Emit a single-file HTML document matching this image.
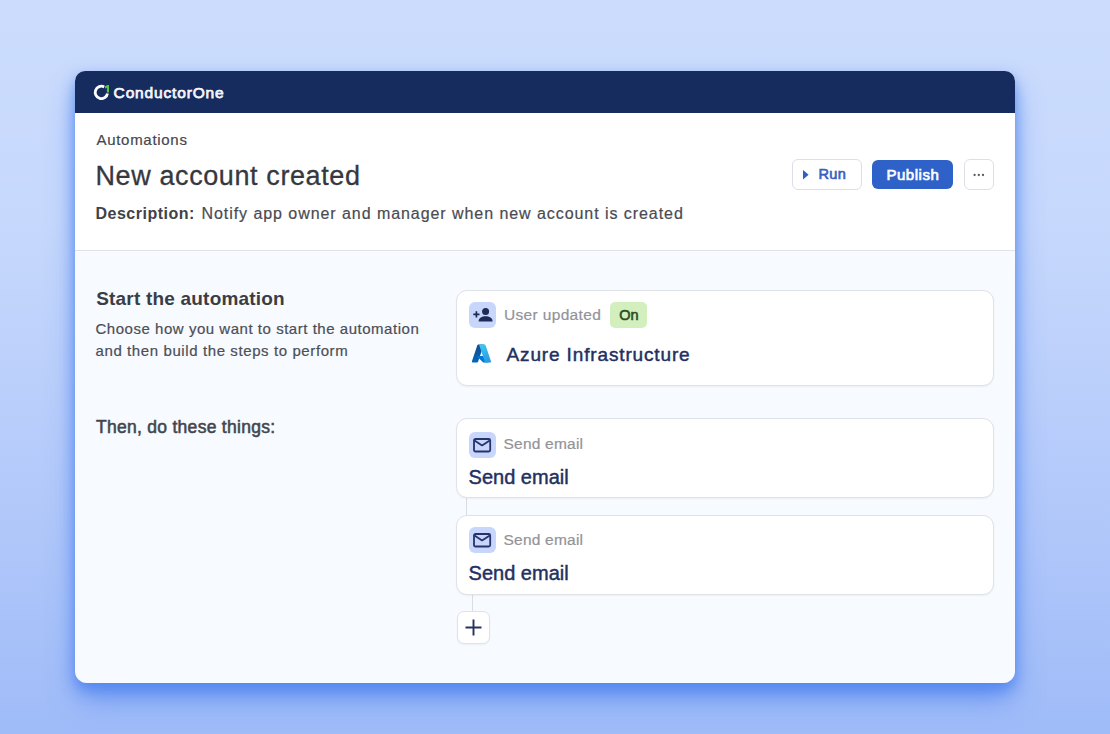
<!DOCTYPE html>
<html lang="en">
<head>
<meta charset="utf-8">
<title>ConductorOne – Automations</title>
<style>
  html, body { margin: 0; padding: 0; }
  body {
    width: 1110px; height: 734px; overflow: hidden; position: relative;
    font-family: "Liberation Sans", sans-serif;
    background: linear-gradient(180deg, #cbdcfd 0%, #c6d8fc 30%, #b4cafa 65%, #9fbbf8 100%);
  }
  .abs { position: absolute; white-space: nowrap; line-height: 1; }
  .window {
    position: absolute; left: 75px; top: 71.4px; width: 940px; height: 611.6px;
    border-radius: 10px 10px 12px 12px; background: #f7fafe; overflow: hidden;
  }
  .shadow {
    position: absolute; left: 75px; top: 71.4px; width: 940px; height: 611.6px;
    border-radius: 10px 10px 12px 12px;
    box-shadow: 0 7px 14px 0px rgba(76, 130, 238, 0.78), 0 18px 30px -4px rgba(76, 130, 240, 0.7);
  }
  .nav { position: absolute; left: 0; top: 0; width: 940px; height: 42px; background: #172c5e; }
  .head { position: absolute; left: 0; top: 42px; width: 940px; height: 136.6px; background: #ffffff; border-bottom: 1px solid #dfe3e8; }
  .card {
    position: absolute; background: #fff; border: 1px solid #dfe2e7; border-radius: 11px;
    box-sizing: border-box; box-shadow: 0 1px 2px rgba(20,40,90,0.05);
  }
  .ibox { position: absolute; width: 27px; height: 26px; border-radius: 6px; background: #c8d6fb; }
  .btn { position: absolute; box-sizing: border-box; border-radius: 6px; }
</style>
</head>
<body>
<div class="shadow"></div>
<div class="window">
  <div class="nav"></div>
  <div class="head"></div>
</div>

<!-- navbar logo -->
<svg class="abs" style="left:92px;top:83px" width="19" height="19" viewBox="0 0 19 19">
  <path d="M12.2 3.9 A6.2 6.2 0 1 0 15.5 10.5" fill="none" stroke="#ffffff" stroke-width="2.8" stroke-linecap="butt"/>
  <path d="M13.0 3.5 L15.3 2.0 L17.0 2.0 L17.0 9.6 L14.9 9.6 L14.9 4.7 L13.0 5.6 Z" fill="#5fc23a"/>
</svg>
<div class="abs" id="t-brand" style="left:113.6px;top:84.6px;font-size:15.5px;font-weight:400;color:#f4f6fc;letter-spacing:0.84px;-webkit-text-stroke:0.75px #f4f6fc">ConductorOne</div>

<!-- header -->
<div class="abs" id="t-crumb" style="left:96.5px;top:132.1px;font-size:15px;color:#44474f;letter-spacing:0.7px;-webkit-text-stroke:0.2px #44474f">Automations</div>
<div class="abs" id="t-title" style="left:95.5px;top:163.3px;font-size:27px;color:#36383e;letter-spacing:0.6px;-webkit-text-stroke:0.3px #36383e">New account created</div>
<div class="abs" id="t-desc1" style="left:95.5px;top:206px;font-size:16px;font-weight:700;color:#404248;letter-spacing:0.5px">Description:</div>
<div class="abs" id="t-desc2" style="left:201.5px;top:206px;font-size:16px;color:#494b52;letter-spacing:0.94px;-webkit-text-stroke:0.2px #494b52">Notify app owner and manager when new account is created</div>

<!-- buttons -->
<div class="btn" style="left:792px;top:159px;width:70px;height:31px;background:#fff;border:1px solid #dcdfe5;"></div>
<svg class="abs" style="left:802px;top:169px" width="8" height="12" viewBox="0 0 8 12"><path d="M1 1 L6.6 5.8 L1 10.6 Z" fill="#2f5ec4"/></svg>
<div class="abs" id="t-run" style="left:818.4px;top:166.8px;font-size:14.5px;font-weight:400;color:#3560c2;letter-spacing:0.35px;-webkit-text-stroke:0.65px #3560c2">Run</div>
<div class="btn" style="left:872px;top:160px;width:81px;height:29px;background:#2f62c9;"></div>
<div class="abs" id="t-pub" style="left:886.4px;top:167px;font-size:15px;font-weight:400;color:#fff;letter-spacing:0.55px;-webkit-text-stroke:0.65px #fff">Publish</div>
<div class="btn" style="left:964px;top:159px;width:30px;height:31px;background:#fff;border:1px solid #dcdfe5;"></div>
<svg class="abs" style="left:972px;top:172px" width="14" height="6" viewBox="0 0 14 6"><circle cx="2.6" cy="3" r="1.15" fill="#5a5d66"/><circle cx="6.8" cy="3" r="1.15" fill="#5a5d66"/><circle cx="11" cy="3" r="1.15" fill="#5a5d66"/></svg>

<!-- left column -->
<div class="abs" id="t-start" style="left:96.2px;top:289.3px;font-size:19px;font-weight:700;color:#3b3d44;letter-spacing:0.2px">Start the automation</div>
<div class="abs" id="t-p1" style="left:95.5px;top:321.4px;font-size:15px;color:#4c4e56;letter-spacing:0.53px;-webkit-text-stroke:0.2px #4c4e56">Choose how you want to start the automation</div>
<div class="abs" id="t-p2" style="left:95.5px;top:343.1px;font-size:15px;color:#4c4e56;letter-spacing:0.6px;-webkit-text-stroke:0.2px #4c4e56">and then build the steps to perform</div>
<div class="abs" id="t-then" style="left:96px;top:419.4px;font-size:17.5px;font-weight:400;color:#43454c;letter-spacing:0.28px;-webkit-text-stroke:0.55px #43454c">Then, do these things:</div>

<!-- card 1 -->
<div class="card" style="left:456px;top:289.9px;width:538px;height:96.6px;"></div>
<div class="ibox" style="left:468.8px;top:301.9px;"></div>
<svg class="abs" style="left:471.7px;top:305.8px" width="22" height="18" viewBox="0 0 22 18">
  <circle cx="13.6" cy="5.4" r="3.5" fill="#1d2b57"/>
  <path d="M6.6 15.6 C6.6 11.6 10 10.2 13.6 10.2 C17.2 10.2 20.6 11.6 20.6 15.6 Z" fill="#1d2b57"/>
  <path d="M1.3 8.3 H7.5 M4.4 5.2 V11.4" stroke="#1d2b57" stroke-width="1.7" fill="none"/>
</svg>
<div class="abs" id="t-uu" style="left:504px;top:307px;font-size:15.5px;color:#919399;letter-spacing:0.34px;-webkit-text-stroke:0.2px #919399">User updated</div>
<div class="abs" style="left:610px;top:302px;width:37px;height:26px;border-radius:5px;background:#d3efbd;"></div>
<div class="abs" id="t-on" style="left:619.3px;top:308px;font-size:14.5px;font-weight:400;color:#2f4d22;letter-spacing:-0.2px;-webkit-text-stroke:0.6px #2f4d22">On</div>
<!-- azure logo -->
<svg class="abs" style="left:471.2px;top:343px" width="20.9" height="20.9" viewBox="0 0 96 96">
  <defs>
    <linearGradient id="azA" x1="58.97" y1="7.41" x2="26.5" y2="103.3" gradientTransform="translate(0 -0.5)" gradientUnits="userSpaceOnUse"><stop offset="0" stop-color="#114a8b"/><stop offset="1" stop-color="#0669bc"/></linearGradient>
    <linearGradient id="azB" x1="45.3" y1="4.1" x2="81.0" y2="99.1" gradientUnits="userSpaceOnUse"><stop offset="0" stop-color="#3ccbf4"/><stop offset="1" stop-color="#2892df"/></linearGradient>
  </defs>
  <path fill="url(#azA)" d="M33.338 6.544h26.038l-27.03 80.087a4.152 4.152 0 0 1-3.933 2.824H8.149a4.145 4.145 0 0 1-3.928-5.47L29.404 9.368a4.152 4.152 0 0 1 3.934-2.825z"/>
  <path fill="#0078d4" d="M71.175 60.261h-41.29a1.911 1.911 0 0 0-1.305 3.309l26.532 24.764a4.171 4.171 0 0 0 2.846 1.121h23.38z"/>
  <path fill="url(#azB)" d="M66.595 9.364a4.145 4.145 0 0 0-3.928-2.82H33.648a4.146 4.146 0 0 1 3.928 2.82l25.184 74.62a4.146 4.146 0 0 1-3.928 5.472h29.02a4.146 4.146 0 0 0 3.927-5.472z"/>
</svg>
<div class="abs" id="t-az" style="left:506.5px;top:344.5px;font-size:19px;color:#22305f;letter-spacing:0.86px;-webkit-text-stroke:0.45px #22305f">Azure Infrastructure</div>

<!-- card 2 -->
<div class="abs" style="left:465.6px;top:497px;width:1.4px;height:19px;background:#d9dce2;"></div>
<div class="card" style="left:456px;top:418.4px;width:538px;height:80px;"></div>
<div class="ibox" style="left:468.8px;top:431.6px;"></div>
<svg class="abs" style="left:473.1px;top:437.5px" width="19" height="15" viewBox="0 0 19 15">
  <rect x="1" y="1" width="16.2" height="12.5" rx="1.5" fill="none" stroke="#25336a" stroke-width="1.8"/>
  <path d="M1.5 2.5 L9.1 7.4 L16.7 2.5" fill="none" stroke="#25336a" stroke-width="1.8" stroke-linejoin="round"/>
</svg>
<div class="abs" id="t-se1" style="left:503.5px;top:436px;font-size:15.5px;color:#919399;letter-spacing:0.22px;-webkit-text-stroke:0.2px #919399">Send email</div>
<div class="abs" id="t-se1b" style="left:468.6px;top:467px;font-size:20px;color:#22305f;letter-spacing:0px;-webkit-text-stroke:0.45px #22305f">Send email</div>

<!-- card 3 -->
<div class="abs" style="left:471.6px;top:593px;width:1.4px;height:19px;background:#d9dce2;"></div>
<div class="card" style="left:456px;top:514.5px;width:538px;height:80px;"></div>
<div class="ibox" style="left:468.9px;top:527.3px;"></div>
<svg class="abs" style="left:473.1px;top:533.3px" width="19" height="15" viewBox="0 0 19 15">
  <rect x="1" y="1" width="16.2" height="12.5" rx="1.5" fill="none" stroke="#25336a" stroke-width="1.8"/>
  <path d="M1.5 2.5 L9.1 7.4 L16.7 2.5" fill="none" stroke="#25336a" stroke-width="1.8" stroke-linejoin="round"/>
</svg>
<div class="abs" id="t-se2" style="left:503.5px;top:532px;font-size:15.5px;color:#919399;letter-spacing:0.22px;-webkit-text-stroke:0.2px #919399">Send email</div>
<div class="abs" id="t-se2b" style="left:468.6px;top:563px;font-size:20px;color:#22305f;letter-spacing:0px;-webkit-text-stroke:0.45px #22305f">Send email</div>

<!-- plus button -->
<div class="card" style="left:456.6px;top:610.8px;width:33.6px;height:33.4px;border-radius:7px;"></div>
<svg class="abs" style="left:465px;top:619px" width="17" height="17" viewBox="0 0 17 17"><path d="M8.5 0.5 V16.5 M0.5 8.5 H16.5" stroke="#24325f" stroke-width="1.9" fill="none"/></svg>
</body>
</html>
